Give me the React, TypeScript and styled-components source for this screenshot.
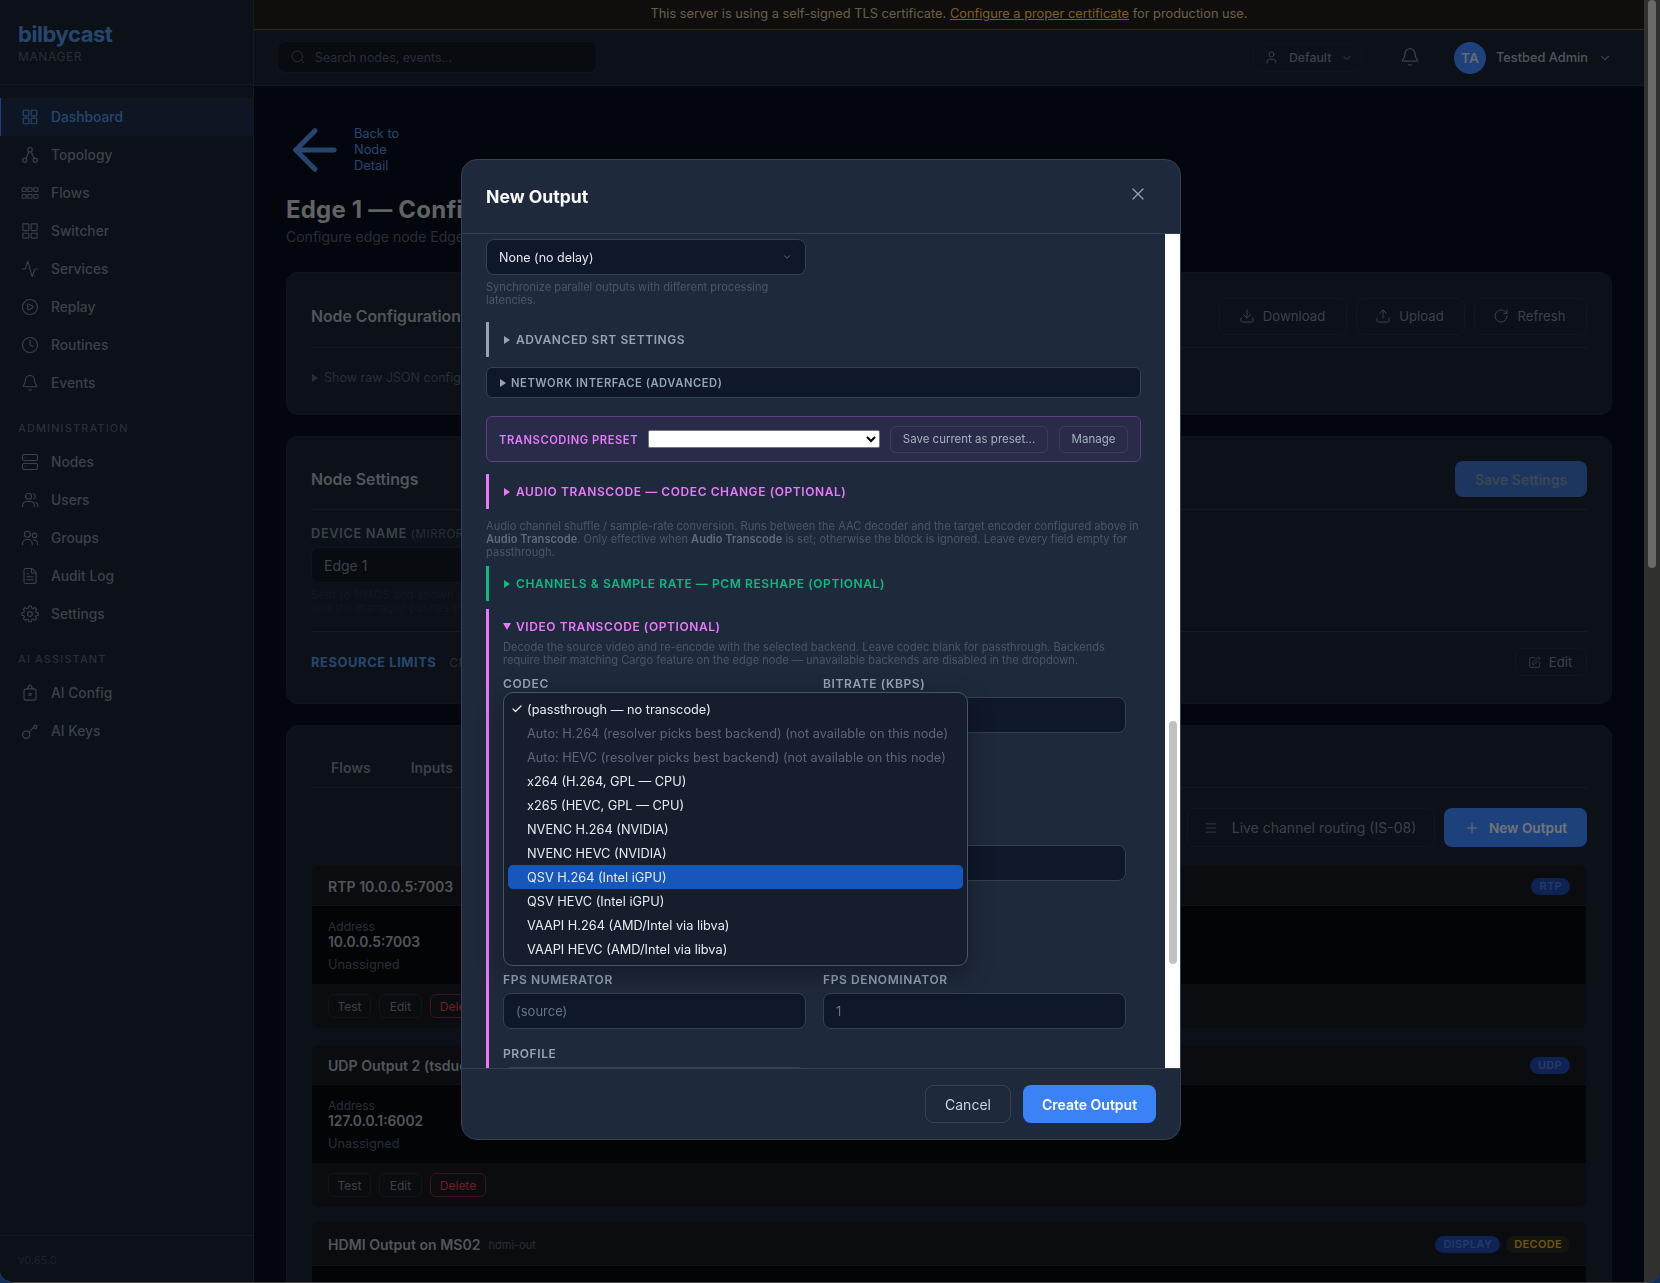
import React from 'react'
import styled, {createGlobalStyle} from 'styled-components'
import {
    Activity, ArrowLeft, Bell, Check, ChevronDown, CirclePlay, Clock, Download, FileText, Menu,
    Plus, RotateCw, Search, Server, SquarePen, Upload, User, X,
} from 'lucide-react'

// colours of the page behind the 50% overlay
const page = {
    surface: '#18202e',
    bg: '#060c1a',
    well: '#10161f',
    line: '#293444',
    lineSoft: '#202a3a',
    text: '#768293',
    textHi: '#a2aab4',
    textLo: '#505d6f',
    textDim: '#394454',
    title: '#c1c4c7',
    blue: '#4c8ddf',
    primary: '#3b82f6',
}

const Global = createGlobalStyle`
  html, body { margin: 0; padding: 0; height: 100%; overflow: hidden; background: #12305a; }
  * { box-sizing: border-box; }
  body { font-family: Inter, "Noto Sans", sans-serif; color: #e2e8f0; }
`

/* small drawings that the icon package has no match for */
const Glyph = ({children}: {children: React.ReactNode}) => (
    <svg width="18" height="18" viewBox="0 0 24 24" fill="none" stroke="currentColor" strokeWidth="1.5" strokeLinecap="round" strokeLinejoin="round">{children}</svg>
)
const DashGlyph = () => <Glyph><rect x="3" y="3" width="7.5" height="7.5" rx="1"/><rect x="13.5" y="3" width="7.5" height="7.5" rx="1"/><rect x="3" y="13.5" width="7.5" height="7.5" rx="1"/><rect x="13.5" y="13.5" width="7.5" height="7.5" rx="1"/></Glyph>
const TopologyGlyph = () => <Glyph><circle cx="12" cy="5" r="3"/><circle cx="5" cy="19" r="2.8"/><circle cx="19" cy="19" r="2.8"/><path d="M10.5 7.8 6.5 16.5M13.5 7.8l4 8.7"/></Glyph>
const FlowsGlyph = () => <Glyph><rect x="1.5" y="5" width="5.5" height="5" rx="1"/><rect x="9.2" y="5" width="5.5" height="5" rx="1"/><rect x="17" y="5" width="5.5" height="5" rx="1"/><rect x="1.5" y="14" width="5.5" height="5" rx="1"/><rect x="9.2" y="14" width="5.5" height="5" rx="1"/><rect x="17" y="14" width="5.5" height="5" rx="1"/></Glyph>
const SwitcherGlyph = () => <Glyph><rect x="2.5" y="2.5" width="8" height="9" rx=".8"/><rect x="13.5" y="2.5" width="8" height="9" rx=".8"/><rect x="2.5" y="15" width="8" height="6.5" rx=".8"/><rect x="13.5" y="15" width="8" height="6.5" rx=".8"/></Glyph>
const UsersGlyph = () => <Glyph><circle cx="10" cy="7" r="4"/><path d="M2 21v-1.5A5.5 5.5 0 0 1 7.5 14h5a5.5 5.5 0 0 1 5.5 5.500V21"/><path d="M17 3.500a4 4 0 0 1 0 7M22.500 21v-1.500a5 5 0 0 0-2.500-4.300"/></Glyph>
const GroupsGlyph = () => <Glyph><circle cx="8.500" cy="7" r="4"/><circle cx="18" cy="8.500" r="3"/><path d="M2 21v-1a6 6 0 0 1 6-6h1a6 6 0 0 1 6 6v1M17 14.500a5 5 0 0 1 5 5V21"/></Glyph>
const CogGlyph = () => <Glyph><path d="M10.300 2.800h3.400l.6 2.700 1.900.8 2.300-1.500 2.400 2.400-1.500 2.300.8 1.900 2.700.6v3.400l-2.700.6-.8 1.900 1.500 2.300-2.400 2.400-2.300-1.500-1.900.8-.6 2.700h-3.400l-.6-2.700-1.900-.8-2.300 1.500-2.400-2.400 1.500-2.300-.8-1.900-2.700-.6v-3.400l2.700-.6.8-1.900-1.500-2.300 2.400-2.400 2.300 1.500 1.900-.8z" transform="translate(0 -1.200) scale(1 .96)"/><circle cx="12" cy="12" r="3.200"/></Glyph>
const LockGlyph = () => <Glyph><path d="M8.500 6.500 10 3.500a2 2 0 0 1 4 0l1.500 3"/><rect x="4" y="6.500" width="16" height="15" rx="3"/><circle cx="12" cy="14" r="1.600"/></Glyph>
const KeyGlyph = () => <Glyph><circle cx="7" cy="17" r="4.800"/><path d="m10.500 13.500 6-6"/><path d="m16.500 7.500 2-3.500 3 1.500-1.500 3.500z"/></Glyph>

const navMain = [
    {label: 'Dashboard', icon: <DashGlyph/>, active: true},
    {label: 'Topology', icon: <TopologyGlyph/>},
    {label: 'Flows', icon: <FlowsGlyph/>},
    {label: 'Switcher', icon: <SwitcherGlyph/>},
    {label: 'Services', icon: <Activity size={18} strokeWidth={1.5}/>},
    {label: 'Replay', icon: <CirclePlay size={18} strokeWidth={1.5}/>},
    {label: 'Routines', icon: <Clock size={18} strokeWidth={1.5}/>},
    {label: 'Events', icon: <Bell size={18} strokeWidth={1.5}/>},
]
const navAdmin = [
    {label: 'Nodes', icon: <Server size={18} strokeWidth={1.5}/>},
    {label: 'Users', icon: <UsersGlyph/>},
    {label: 'Groups', icon: <GroupsGlyph/>},
    {label: 'Audit Log', icon: <FileText size={18} strokeWidth={1.5}/>},
    {label: 'Settings', icon: <CogGlyph/>},
]
const navAi = [
    {label: 'AI Config', icon: <LockGlyph/>},
    {label: 'AI Keys', icon: <KeyGlyph/>},
]
const codecs = [
    {label: '(passthrough — no transcode)', checked: true},
    {label: 'Auto: H.264 (resolver picks best backend) (not available on this node)', disabled: true},
    {label: 'Auto: HEVC (resolver picks best backend) (not available on this node)', disabled: true},
    {label: 'x264 (H.264, GPL — CPU)'},
    {label: 'x265 (HEVC, GPL — CPU)'},
    {label: 'NVENC H.264 (NVIDIA)'},
    {label: 'NVENC HEVC (NVIDIA)'},
    {label: 'QSV H.264 (Intel iGPU)', selected: true},
    {label: 'QSV HEVC (Intel iGPU)'},
    {label: 'VAAPI H.264 (AMD/Intel via libva)'},
    {label: 'VAAPI HEVC (AMD/Intel via libva)'},
]

const Shell = styled.div`
  display: flex;
  width: 1660px;
  height: 1283px;
  overflow: hidden;
  border-bottom: 1px solid #45484c;
  border-radius: 0 0 14px 14px;
`
const Screen = styled.div`
  position: relative;
  display: flex;
  width: 1644px;
  height: 100%;
  overflow: hidden;
  background: ${page.bg};
`
const PageScrollbar = styled.div`
  width: 16px;
  background: #30302e;
  padding: 0 4px;
`
const PageThumb = styled.div`
  height: 568px;
  background: #6a6a6a;
  border-radius: 4px;
`

const Sidebar = styled.aside`
  width: 254px;
  flex: none;
  display: flex;
  flex-direction: column;
  background: ${page.surface};
  border-right: 1px solid ${page.line};
`
const Brand = styled.div`
  height: 85px;
  padding: 20px 18px 0;
  border-bottom: 1px solid ${page.line};
`
const BrandName = styled.div`
  font-size: 22px;
  line-height: 28px;
  font-weight: 700;
  letter-spacing: -0.02em;
  color: ${page.blue};
`
const BrandSub = styled.div`
  font-size: 12px;
  line-height: 16px;
  margin-top: 1px;
  letter-spacing: 0.05em;
  color: ${page.textLo};
`
const Nav = styled.nav`
  flex: 1;
  padding-top: 13px;
`
const NavItem = styled.a<{$active?: boolean}>`
  display: flex;
  align-items: center;
  gap: 12px;
  height: 38px;
  padding-left: 20px;
  font-size: 13.800px;
  font-weight: 500;
  color: ${({$active}) => $active ? page.blue : page.text};
  background: ${({$active}) => $active ? 'rgba(59,130,246,.12)' : 'transparent'};
  border-left: 1px solid ${({$active}) => $active ? page.primary : 'transparent'};
`
const NavHeading = styled.div`
  margin: 19px 0 8px 18px;
  font-size: 11px;
  line-height: 14px;
  letter-spacing: 0.1em;
  font-weight: 500;
  color: ${page.textLo};
`
const Version = styled.div`
  height: 47px;
  padding: 17px 18px 0;
  border-top: 1px solid ${page.line};
  font-size: 11px;
  color: ${page.textDim};
`

const Main = styled.div`
  flex: 1;
  min-width: 0;
  display: flex;
  flex-direction: column;
`
const Banner = styled.div`
  height: 30px;
  flex: none;
  text-align: center;
  font-size: 12.800px;
  line-height: 28px;
  color: #d2be8c;
  background: #1e1c1a;
  border-bottom: 1px solid #64542a;
  a { color: #fabe46; text-decoration: underline; }
`
const TopBar = styled.header`
  height: 56px;
  flex: none;
  display: flex;
  align-items: center;
  padding: 0 32px 0 23px;
  background: ${page.surface};
  border-bottom: 1px solid ${page.line};
`
const SearchBox = styled.div`
  width: 320px;
  height: 32px;
  margin-top: -1px;
  display: flex;
  align-items: center;
  gap: 9px;
  padding-left: 12px;
  border-radius: 8px;
  background: ${page.well};
  border: 1px solid ${page.lineSoft};
  font-size: 12.400px;
  color: ${page.textLo};
`
const ProfileButton = styled.div`
  width: 109px;
  height: 28px;
  margin-left: auto;
  display: flex;
  align-items: center;
  gap: 10px;
  padding-left: 10px;
  border-radius: 6px;
  background: #19222f;
  border: 1px solid #1e2938;
  font-size: 12.300px;
  font-weight: 500;
  color: ${page.text};
`
const BellWrap = styled.div`
  margin: -1px 0 0 38px;
  color: ${page.text};
  display: flex;
`
const Avatar = styled.div`
  width: 32px;
  height: 32px;
  margin-left: 34px;
  border-radius: 50%;
  background: ${page.primary};
  color: #cbd5e1;
  font-size: 13.600px;
  font-weight: 600;
  display: flex;
  align-items: center;
  justify-content: center;
`
const UserName = styled.div`
  margin-left: 10px;
  font-size: 12.800px;
  font-weight: 500;
  color: ${page.textHi};
`
const UserChevron = styled(ChevronDown)`
  margin-left: 10px;
  color: ${page.text};
`
const Content = styled.main`
  flex: 1;
  min-height: 0;
  overflow: hidden;
  padding: 40px 32px 0;
`
const BackLink = styled.a`
  display: flex;
  align-items: center;
  gap: 6px;
  height: 48px;
  color: ${page.blue};
  font-size: 12.800px;
  line-height: 16px;
  svg { margin-left: -4px; flex: none; }
  div { width: 48px; }
`
const PageTitle = styled.h1`
  margin: 20px 0 0;
  font-size: 24px;
  line-height: 32px;
  font-weight: 700;
  letter-spacing: 0.2px;
  color: ${page.title};
`
const PageSub = styled.p`
  margin: 1px 0 0;
  font-size: 14px;
  line-height: 20px;
  color: ${page.textLo};
`
const Card = styled.section<{$mt: number, $h?: number}>`
  margin-top: ${({$mt}) => $mt}px;
  ${({$h}) => $h ? `height: ${$h}px;` : ''}
  padding: 0 24px;
  background: ${page.surface};
  border: 1px solid ${page.lineSoft};
  border-radius: 12px;
`
const CardHead = styled.div<{$h: number}>`
  height: ${({$h}) => $h}px;
  display: flex;
  align-items: center;
  justify-content: space-between;
  padding-top: 12px;
  border-bottom: 1px solid ${page.line};
`
const CardTitle = styled.h2`
  margin: 0;
  font-size: 15.800px;
  font-weight: 600;
  color: ${page.textHi};
`
const ButtonRow = styled.div`
  display: flex;
  gap: 9px;
  align-items: center;
`
const GhostButton = styled.div<{$w: number, $h?: number}>`
  width: ${({$w}) => $w}px;
  height: ${({$h}) => $h ?? 37}px;
  display: flex;
  align-items: center;
  justify-content: center;
  gap: 8px;
  padding-right: 2px;
  font-size: 13.200px;
  color: ${page.text};
  border: 1px solid #242e3e;
  border-radius: 8px;
  background: ${page.surface};
`
const RawToggle = styled.div`
  margin-top: 22px;
  display: flex;
  align-items: center;
  gap: 6px;
  font-size: 12.500px;
  line-height: 16px;
  color: ${page.textLo};
`
const SaveButton = styled.div`
  width: 132px;
  height: 36px;
  display: flex;
  align-items: center;
  justify-content: center;
  border-radius: 8px;
  background: #386cc0;
  color: #788ca0;
  font-size: 14px;
  font-weight: 600;
`
const FieldLabelDim = styled.div`
  margin-top: 16px;
  font-size: 12.800px;
  line-height: 16px;
  font-weight: 600;
  letter-spacing: 0.05em;
  color: ${page.text};
  span { font-weight: 400; font-size: 11.500px; color: ${page.textLo}; }
`
const PageInput = styled.input`
  display: block;
  width: 500px;
  height: 36px;
  margin-top: 5px;
  padding: 0 12px;
  border-radius: 8px;
  border: 1px solid ${page.lineSoft};
  background: ${page.well};
  color: ${page.text};
  font: 14px Inter, sans-serif;
`
const PageHint = styled.div`
  margin-top: 6px;
  font-size: 11.200px;
  line-height: 13px;
  letter-spacing: 0.03em;
  color: #263040;
`
const LimitsRow = styled.div`
  margin-top: 16px;
  padding-top: 16px;
  border-top: 1px solid ${page.line};
  display: flex;
  align-items: center;
  justify-content: space-between;
`
const LimitsTitle = styled.div`
  display: flex;
  gap: 13px;
  align-items: baseline;
  font-size: 13px;
  font-weight: 700;
  letter-spacing: 0.04em;
  color: ${page.blue};
  span { font-size: 12px; font-weight: 400; color: ${page.textLo}; }
`
const Tabs = styled.div`
  height: 62px;
  display: flex;
  align-items: center;
  gap: 40px;
  padding: 22px 0 0 20px;
  border-bottom: 1px solid ${page.line};
  font-size: 14px;
  font-weight: 600;
  color: ${page.text};
`
const ToolRow = styled.div`
  margin-top: 20px;
  display: flex;
  justify-content: flex-end;
  gap: 9px;
`
const RoutingButton = styled(GhostButton)`
  gap: 14px;
  font-size: 14px;
`
const PrimaryButton = styled.div`
  width: 143px;
  height: 39px;
  display: flex;
  align-items: center;
  justify-content: center;
  gap: 9px;
  border-radius: 8px;
  background: ${page.primary};
  color: #e2e8f0;
  font-size: 13.600px;
  font-weight: 600;
`
const OutputCard = styled.article<{$mt: number}>`
  margin-top: ${({$mt}) => $mt}px;
  border-radius: 8px;
  overflow: hidden;
  background: #14181e;
  border: 1px solid #1a1f28;
`
const OutputHead = styled.div<{$h: number}>`
  height: ${({$h}) => $h}px;
  display: flex;
  align-items: center;
  gap: 8px;
  padding: 1px 16px 0;
  border-bottom: 1px solid #1d222b;
`
const OutputName = styled.span`
  font-size: 14.100px;
  font-weight: 600;
  color: ${page.textHi};
`
const OutputKey = styled.span`
  margin-top: 2px;
  font-size: 11px;
  color: ${page.textLo};
`
const Badge = styled.span<{$first?: boolean, $tone: 'blue' | 'amber'}>`
  ${({$first}) => $first ? 'margin-left: auto;' : 'margin-left: -2px;'}
  height: 17px;
  padding: 0 8px;
  border-radius: 9px;
  display: flex;
  align-items: center;
  font-size: 11px;
  font-weight: 600;
  letter-spacing: 0.03em;
  color: ${({$tone}) => $tone === 'blue' ? '#4878c8' : '#deaa28'};
  background: ${({$tone}) => $tone === 'blue' ? '#1c46a8' : '#2a2a20'};
`
const OutputBody = styled.div`
  height: 78px;
  padding: 13.500px 16px 0;
  background: #06080c;
`
const OutputLabel = styled.div`
  font-size: 12px;
  line-height: 14px;
  color: ${page.textLo};
`
const OutputValue = styled.div`
  font-size: 13.800px;
  line-height: 16px;
  font-weight: 600;
  color: ${page.textHi};
`
const OutputMeta = styled.div`
  margin-top: 6.500px;
  font-size: 12.800px;
  line-height: 18px;
  color: ${page.textLo};
`
const OutputFoot = styled.div`
  height: 44px;
  display: flex;
  gap: 8px;
  padding: 10px 16px 0;
`
const SmallButton = styled.div<{$danger?: boolean, $w: number}>`
  width: ${({$w}) => $w}px;
  height: 24px;
  display: flex;
  align-items: center;
  justify-content: center;
  font-size: 12px;
  color: ${({$danger}) => $danger ? '#dc404c' : page.text};
  border: 1px solid ${({$danger}) => $danger ? '#78283a' : '#242c38'};
  border-radius: 6px;
`

const Overlay = styled.div`
  position: absolute;
  inset: 0;
  display: flex;
  justify-content: center;
  align-items: flex-start;
  padding: 159px 2px 0 0;
  background: rgba(0, 0, 0, 0.5);
  backdrop-filter: blur(0.6px);
`
const Modal = styled.div`
  width: 720px;
  height: 981px;
  display: flex;
  flex-direction: column;
  overflow: hidden;
  background: #1e293b;
  border: 1px solid #334155;
  border-radius: 16px;
`
const ModalHead = styled.div`
  height: 74px;
  flex: none;
  display: flex;
  align-items: center;
  justify-content: space-between;
  padding: 0 32px 2px 24px;
  border-bottom: 1px solid #334155;
`
const ModalTitle = styled.h3`
  margin: 1px 0 0;
  font-size: 17.600px;
  font-weight: 700;
  color: #f8fafc;
`
const CloseWrap = styled.div`
  display: flex;
  margin-top: -3px;
  color: #94a3b8;
`
const ModalMiddle = styled.div`
  flex: 1;
  min-height: 0;
  display: flex;
`
const ModalBody = styled.div`
  flex: 1;
  min-width: 0;
  overflow: hidden;
  padding: 5px 24px 0;
`
const Track = styled.div`
  width: 15px;
  flex: none;
  background: #fff;
  padding: 487px 3px 0 4px;
`
const Thumb = styled.div`
  height: 243px;
  border-radius: 4px;
  background: #c1c1c1;
`
const DelaySelect = styled.div`
  width: 320px;
  height: 36px;
  display: flex;
  align-items: center;
  justify-content: space-between;
  padding: 0 13px 0 12px;
  border-radius: 8px;
  background: #0f172a;
  border: 1px solid #334155;
  font-size: 12.500px;
  color: #e2e8f0;
  svg { color: #64748b; }
`
const Hint = styled.p<{$mt: number, $w?: number}>`
  margin: ${({$mt}) => $mt}px 0 0;
  ${({$w}) => $w ? `width: ${$w}px;` : ''}
  font-size: 11.100px;
  line-height: 13px;
  color: #4a5769;
  b { font-weight: 600; color: #5f6b7c; }
`
const Section = styled.div<{$accent: string, $mt: number}>`
  margin-top: ${({$mt}) => $mt}px;
  border-left: 3px solid ${({$accent}) => $accent};
`
const SectionHead = styled.div<{$color: string}>`
  height: 35px;
  display: flex;
  align-items: center;
  gap: 6px;
  padding-left: 14px;
  font-size: 12px;
  font-weight: 600;
  letter-spacing: 0.048em;
  color: ${({$color}) => $color};
`
const Caret = styled.i<{$open?: boolean}>`
  display: block;
  width: 0;
  height: 0;
  ${({$open}) => $open ? `
    margin-right: 1px;
    border-left: 4px solid transparent;
    border-right: 4px solid transparent;
    border-top: 7px solid currentColor;
  ` : `
    margin-left: 1px;
    border-top: 4px solid transparent;
    border-bottom: 4px solid transparent;
    border-left: 6px solid currentColor;
  `}
`
const NetworkBox = styled.div`
  margin-top: 10px;
  height: 31px;
  display: flex;
  align-items: center;
  gap: 5px;
  padding-left: 12px;
  border-radius: 6px;
  background: #0f172a;
  border: 1px solid #334155;
  font-size: 11.200px;
  font-weight: 600;
  letter-spacing: 0.05em;
  color: #94a3b8;
`
const PresetBox = styled.div`
  margin-top: 18px;
  height: 46px;
  display: flex;
  align-items: center;
  padding: 0 12px;
  border-radius: 6px;
  background: #2a2b49;
  border: 1px solid #5e3f7f;
`
const PresetLabel = styled.div`
  width: 149px;
  padding-top: 2px;
  font-size: 11.200px;
  font-weight: 600;
  letter-spacing: 0.05em;
  color: #e879f9;
`
const PresetSelect = styled.select`
  width: 232px;
  height: 18px;
  padding: 0;
  background: #fff;
  border: 1px solid #767676;
  border-radius: 2px;
  color: #000;
  font-size: 11px;
`
const PresetButton = styled.div<{$w: number, $ml: number}>`
  width: ${({$w}) => $w}px;
  margin-left: ${({$ml}) => $ml}px;
  height: 27px;
  display: flex;
  align-items: center;
  justify-content: center;
  border: 1px solid #3a3c5c;
  border-radius: 6px;
  font-size: 11.500px;
  color: #a6b0c2;
`
const VideoTitle = styled(SectionHead)`
  height: 14px;
  gap: 4px;
  margin-bottom: 8px;
  padding: 0;
`
const VideoSection = styled(Section)`
  padding: 10px 14px 0 0;
`
const VideoInner = styled.div`
  position: relative;
  padding-left: 14px;
`
const FieldGrid = styled.div`
  margin-top: 10px;
  display: grid;
  grid-template-columns: 303px 303px;
  column-gap: 17px;
  row-gap: 18px;
`
const Field = styled.div``
const FieldLabel = styled.div`
  height: 14px;
  margin-bottom: 6px;
  font-size: 12px;
  line-height: 14px;
  font-weight: 600;
  letter-spacing: 0.05em;
  color: #94a3b8;
`
const FieldInput = styled.input`
  display: block;
  width: 100%;
  height: 36px;
  padding: 0 12px;
  border-radius: 8px;
  background: #0f172a;
  border: 1px solid #334155;
  color: #e2e8f0;
  font: 13px Inter, sans-serif;
  &::placeholder { color: #64748b; }
`
const Dropdown = styled.ul`
  position: absolute;
  left: 14px;
  top: 73px;
  width: 465px;
  height: 274px;
  margin: 0;
  padding: 4px;
  list-style: none;
  background: #161e2e;
  border: 1px solid #475569;
  border-radius: 10px;
  box-shadow: 0 8px 24px rgba(0, 0, 0, .35);
`
const DropItem = styled.li<{$selected?: boolean, $disabled?: boolean}>`
  position: relative;
  height: 24px;
  padding-left: 19px;
  display: flex;
  align-items: center;
  border-radius: 5px;
  font-size: 12.750px;
  white-space: nowrap;
  color: ${({$disabled}) => $disabled ? '#5d6675' : '#e7ebf1'};
  background: ${({$selected}) => $selected ? '#1557bb' : 'transparent'};
`
const CheckMark = styled.span`
  position: absolute;
  left: 3px;
  top: 6px;
  display: flex;
`
const ModalFoot = styled.div`
  height: 71px;
  flex: none;
  display: flex;
  justify-content: flex-end;
  gap: 12px;
  padding: 16px 24px 0;
  border-top: 1px solid #334155;
`
const CancelButton = styled.div`
  width: 86px;
  height: 38px;
  display: flex;
  align-items: center;
  justify-content: center;
  border-radius: 8px;
  border: 1px solid #334155;
  font-size: 14px;
  color: #cbd5e1;
`
const CreateButton = styled.div`
  width: 133px;
  height: 38px;
  display: flex;
  align-items: center;
  justify-content: center;
  border-radius: 8px;
  background: #3b82f6;
  font-size: 14px;
  font-weight: 600;
  color: #fff;
`

const OutputBlock = ({name, address, badge, mt}: {name: string, address: string, badge: string, mt: number}) => (
    <OutputCard $mt={mt}>
        <OutputHead $h={40}>
            <OutputName>{name}</OutputName>
            <Badge $first $tone="blue">{badge}</Badge>
        </OutputHead>
        <OutputBody>
            <OutputLabel>Address</OutputLabel>
            <OutputValue>{address}</OutputValue>
            <OutputMeta>Unassigned</OutputMeta>
        </OutputBody>
        <OutputFoot>
            <SmallButton $w={43}>Test</SmallButton>
            <SmallButton $w={43}>Edit</SmallButton>
            <SmallButton $w={56} $danger>Delete</SmallButton>
        </OutputFoot>
    </OutputCard>
)

const NavList = ({items}: {items: {label: string, icon: React.ReactNode, active?: boolean}[]}) => (
    <>{items.map(({label, icon, active}) => <NavItem key={label} $active={active}>{icon}{label}</NavItem>)}</>
)

export default function App() {
    return <Shell>
        <Global/>
        <Screen>
            <Sidebar>
                <Brand>
                    <BrandName>bilbycast</BrandName>
                    <BrandSub>MANAGER</BrandSub>
                </Brand>
                <Nav>
                    <NavList items={navMain}/>
                    <NavHeading>ADMINISTRATION</NavHeading>
                    <NavList items={navAdmin}/>
                    <NavHeading>AI ASSISTANT</NavHeading>
                    <NavList items={navAi}/>
                </Nav>
                <Version>v0.65.0</Version>
            </Sidebar>
            <Main>
                <Banner>This server is using a self-signed TLS certificate. <a>Configure a proper certificate</a> for production use.</Banner>
                <TopBar>
                    <SearchBox><Search size={16} strokeWidth={1.5}/>Search nodes, events...</SearchBox>
                    <ProfileButton><User size={15} strokeWidth={1.5}/>Default<ChevronDown size={12}/></ProfileButton>
                    <BellWrap><Bell size={20} strokeWidth={1.5}/></BellWrap>
                    <Avatar>TA</Avatar>
                    <UserName>Testbed Admin</UserName>
                    <UserChevron size={14}/>
                </TopBar>
                <Content>
                    <BackLink>
                        <ArrowLeft size={66} strokeWidth={1.8}/>
                        <div>Back to Node Detail</div>
                    </BackLink>
                    <PageTitle>Edge 1 — Configuration</PageTitle>
                    <PageSub>Configure edge node Edge 1</PageSub>
                    <Card $mt={25} $h={143}>
                        <CardHead $h={75}>
                            <CardTitle>Node Configuration</CardTitle>
                            <ButtonRow>
                                <GhostButton $w={128}><Download size={16} strokeWidth={1.5}/>Download</GhostButton>
                                <GhostButton $w={109}><Upload size={16} strokeWidth={1.5}/>Upload</GhostButton>
                                <GhostButton $w={113}><RotateCw size={16} strokeWidth={1.5}/>Refresh</GhostButton>
                            </ButtonRow>
                        </CardHead>
                        <RawToggle><Caret/>Show raw JSON configuration</RawToggle>
                    </Card>
                    <Card $mt={21} $h={268}>
                        <CardHead $h={73}>
                            <CardTitle>Node Settings</CardTitle>
                            <SaveButton>Save Settings</SaveButton>
                        </CardHead>
                        <FieldLabelDim>DEVICE NAME <span>(MIRRORS TO NMOS)</span></FieldLabelDim>
                        <PageInput readOnly value="Edge 1"/>
                        <PageHint>Sent to NMOS and shown in the UI<br/>and the manager pushes the change</PageHint>
                        <LimitsRow>
                            <LimitsTitle>RESOURCE LIMITS <span>CPU</span></LimitsTitle>
                            <GhostButton $w={72} $h={28}><SquarePen size={13} strokeWidth={1.5}/>Edit</GhostButton>
                        </LimitsRow>
                    </Card>
                    <Card $mt={21}>
                        <Tabs><span>Flows</span><span>Inputs</span></Tabs>
                        <ToolRow>
                            <RoutingButton $w={248} $h={39}><Menu size={14} strokeWidth={1.5}/>Live channel routing (IS-08)</RoutingButton>
                            <PrimaryButton><Plus size={16} strokeWidth={1.5}/>New Output</PrimaryButton>
                        </ToolRow>
                        <OutputBlock mt={18} name="RTP 10.0.0.5:7003" address="10.0.0.5:7003" badge="RTP"/>
                        <OutputBlock mt={15} name="UDP Output 2 (tsduck)" address="127.0.0.1:6002" badge="UDP"/>
                        <OutputCard $mt={13}>
                            <OutputHead $h={44}>
                                <OutputName>HDMI Output on MS02</OutputName>
                                <OutputKey>hdmi-out</OutputKey>
                                <Badge $first $tone="blue">DISPLAY</Badge>
                                <Badge $tone="amber">DECODE</Badge>
                            </OutputHead>
                            <OutputBody/>
                        </OutputCard>
                    </Card>
                </Content>
            </Main>
            <Overlay>
                <Modal>
                    <ModalHead>
                        <ModalTitle>New Output</ModalTitle>
                        <CloseWrap><X size={20} strokeWidth={1.5}/></CloseWrap>
                    </ModalHead>
                    <ModalMiddle>
                        <ModalBody>
                            <DelaySelect>None (no delay)<ChevronDown size={10}/></DelaySelect>
                            <Hint $mt={6} $w={319}>Synchronize parallel outputs with different processing latencies.</Hint>
                            <Section $accent="#94a3b8" $mt={15}>
                                <SectionHead $color="#94a3b8"><Caret/>ADVANCED SRT SETTINGS</SectionHead>
                            </Section>
                            <NetworkBox><Caret/>NETWORK INTERFACE (ADVANCED)</NetworkBox>
                            <PresetBox>
                                <PresetLabel>TRANSCODING PRESET</PresetLabel>
                                <PresetSelect><option></option></PresetSelect>
                                <PresetButton $w={158} $ml={10}>Save current as preset...</PresetButton>
                                <PresetButton $w={69} $ml={11}>Manage</PresetButton>
                            </PresetBox>
                            <Section $accent="#e879f9" $mt={12}>
                                <SectionHead $color="#e879f9"><Caret/>AUDIO TRANSCODE — CODEC CHANGE (OPTIONAL)</SectionHead>
                            </Section>
                            <Hint $mt={11}>Audio channel shuffle / sample-rate conversion. Runs between the AAC decoder and the target encoder configured above in <b>Audio Transcode</b>. Only effective when <b>Audio Transcode</b> is set; otherwise the block is ignored. Leave every field empty for passthrough.</Hint>
                            <Section $accent="#10b981" $mt={7}>
                                <SectionHead $color="#10b981"><Caret/>CHANNELS &amp; SAMPLE RATE — PCM RESHAPE (OPTIONAL)</SectionHead>
                            </Section>
                            <VideoSection $accent="#e879f9" $mt={8}>
                                <VideoInner>
                                    <VideoTitle $color="#e879f9"><Caret $open/>VIDEO TRANSCODE (OPTIONAL)</VideoTitle>
                                    <Hint $mt={0}>Decode the source video and re-encode with the selected backend. Leave codec blank for passthrough. Backends require their matching Cargo feature on the edge node — unavailable backends are disabled in the dropdown.</Hint>
                                    <FieldGrid>
                                        <Field><FieldLabel>CODEC</FieldLabel><FieldInput readOnly/></Field>
                                        <Field><FieldLabel>BITRATE (KBPS)</FieldLabel><FieldInput readOnly/></Field>
                                        <Field><FieldLabel/><FieldInput readOnly/></Field>
                                        <Field/>
                                        <Field><FieldLabel/><FieldInput readOnly/></Field>
                                        <Field><FieldLabel/><FieldInput readOnly/></Field>
                                        <Field><FieldLabel/><FieldInput readOnly/></Field>
                                        <Field/>
                                        <Field><FieldLabel>FPS NUMERATOR</FieldLabel><FieldInput placeholder="(source)"/></Field>
                                        <Field><FieldLabel>FPS DENOMINATOR</FieldLabel><FieldInput placeholder="1"/></Field>
                                        <Field><FieldLabel>PROFILE</FieldLabel><FieldInput readOnly/></Field>
                                    </FieldGrid>
                                    <Dropdown>
                                        {codecs.map(({label, checked, disabled, selected}) => <DropItem key={label} $selected={selected} $disabled={disabled}>
                                            {checked && <CheckMark><Check size={12} strokeWidth={2.5}/></CheckMark>}
                                            {label}
                                        </DropItem>)}
                                    </Dropdown>
                                </VideoInner>
                            </VideoSection>
                        </ModalBody>
                        <Track><Thumb/></Track>
                    </ModalMiddle>
                    <ModalFoot>
                        <CancelButton>Cancel</CancelButton>
                        <CreateButton>Create Output</CreateButton>
                    </ModalFoot>
                </Modal>
            </Overlay>
        </Screen>
        <PageScrollbar><PageThumb/></PageScrollbar>
    </Shell>
}
